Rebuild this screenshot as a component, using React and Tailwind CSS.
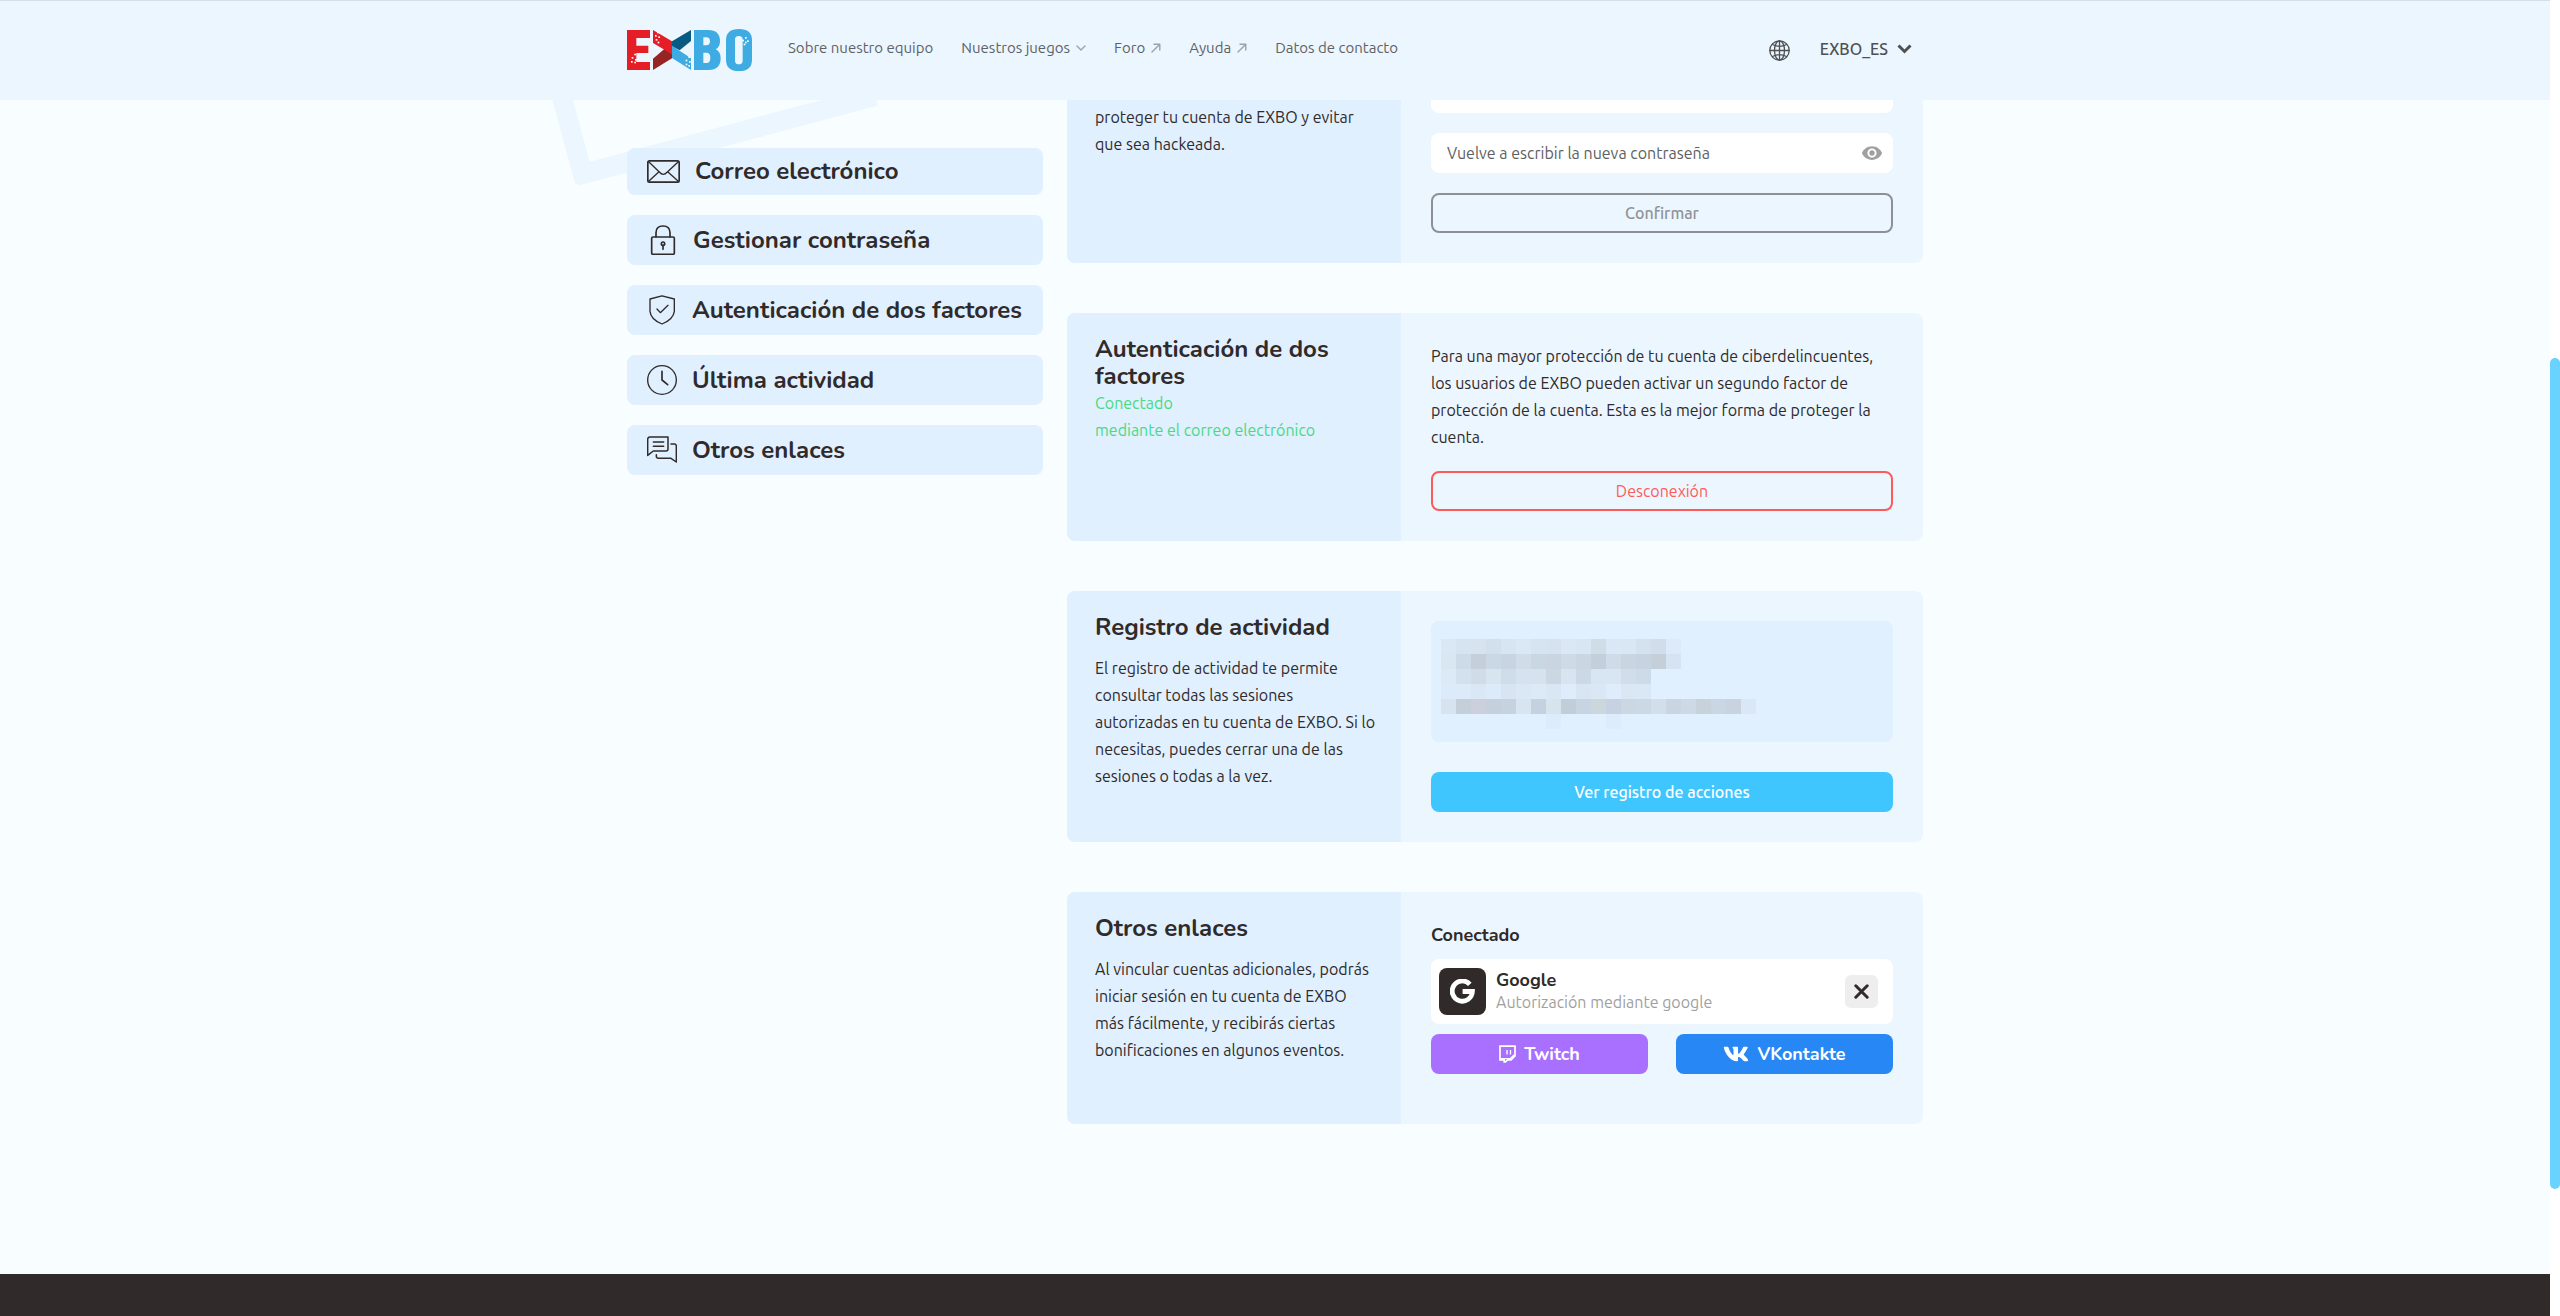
import { FaVk } from 'react-icons/fa';
import { MdVisibility } from 'react-icons/md';

/* ---------- Logo and icons ---------- */

const LOGO_DOTS = [
  [14, 84], [22, 74], [24, 90], [12, 96], [22, 98],
  [90, 8], [84, 18], [94, 22], [86, 30], [92, 38],
  [184, 82], [176, 92], [186, 96], [176, 104], [184, 108],
  [354, 24], [346, 32], [354, 38], [360, 34], [350, 44],
];

function Logo() {
  return (
    <svg viewBox="0 0 375 126" className="w-[125px] h-[42px]" role="img" aria-label="EXBO">
      <path fill="#e51d26" d="M0 3H69V27H28V50H64V72H28V99H69V123H0Z" />
      <path fill="#962423" d="M78 123V89L112 60L135 74V88Z" />
      <path fill="#e51d26" d="M78 3L135 37V76L78 42Z" />
      <path fill="#075a82" d="M192 3V36L158 64L135 52V37Z" />
      <path fill="#3eabe2" d="M135 50L192 88V123L135 87Z" />
      <path
        fill="#3eabe2"
        fillRule="evenodd"
        d="M201 3H243Q279 3 279 37Q279 54 266 61Q281 68 281 88Q281 123 245 123H201ZM229 25V49H238Q249 49 249 37Q249 25 238 25ZM229 71V102H238Q250 102 250 86Q250 71 238 71Z"
      />
      <path
        fill="#3eabe2"
        fillRule="evenodd"
        d="M297 34Q297 0 336 0Q375 0 375 34V92Q375 126 336 126Q297 126 297 92ZM324 32V95Q324 106 335 106Q347 106 347 95V32Q347 21 335 21Q324 21 324 32Z"
      />
      {LOGO_DOTS.map(([x, y]) => (
        <rect key={`${x}-${y}`} x={x} y={y} width="5" height="5" fill="#fff" />
      ))}
    </svg>
  );
}

const line = { fill: 'none', stroke: 'currentColor', strokeLinecap: 'round', strokeLinejoin: 'round' };

const MailIcon = () => (
  <svg viewBox="141 90 99 69" className="h-[23px] w-[33px] shrink-0" aria-hidden="true" {...line} strokeWidth="5">
    <rect x="143.5" y="92.5" width="94" height="64" rx="5" />
    <path strokeWidth="4" d="M146 95L178 126Q190 140 202 126L235 95M146 154L177 125M203 125L235 154" />
  </svg>
);

const LockIcon = () => (
  <svg viewBox="141 285 93 90" className="h-[30px] w-[31px] shrink-0" aria-hidden="true" {...line} strokeWidth="5">
    <rect x="155" y="321" width="68" height="52" rx="4" />
    <path d="M168 320V308Q168 288 189 288Q210 288 210 308V320" />
    <circle cx="189" cy="341" r="5" />
    <path d="M189 346V358" />
  </svg>
);

const ShieldIcon = () => (
  <svg viewBox="141 495 90 90" className="h-[30px] w-[30px] shrink-0" aria-hidden="true" {...line} strokeWidth="4">
    <path d="M186 497.5L150 507V544Q152 568 186 582Q220 568 223 544V507Z" />
    <path d="M171 537L181 548L204 526" />
  </svg>
);

const ClockIcon = () => (
  <svg viewBox="141 705 90 90" className="h-[30px] w-[30px] shrink-0" aria-hidden="true" {...line} strokeWidth="4">
    <circle cx="186" cy="750" r="43" />
    <path strokeWidth="5" d="M186 724V750L203 764" />
  </svg>
);

const ChatIcon = () => (
  <svg viewBox="141 915 90 90" className="h-[30px] w-[30px] shrink-0" aria-hidden="true" {...line} strokeWidth="4.5">
    <path d="M143 976V928Q143 921 150 921H204V957Q204 963 198 963H160Z" />
    <path d="M160 936H191M160 949H191" />
    <path d="M213 942H223Q229 942 229 948V996L213 985H176Q169 985 169 979V974" />
  </svg>
);

const GlobeIcon = () => (
  <svg viewBox="0 0 21 21" className="size-[21px]" aria-hidden="true" {...line} strokeWidth="1.3">
    <circle cx="10.5" cy="10.5" r="9.7" />
    <ellipse cx="10.5" cy="10.5" rx="5" ry="9.7" />
    <path d="M10.5 1V20M1 10.5H20M3.5 4.5Q10.5 8.2 17.5 4.5M3.5 16.5Q10.5 12.8 17.5 16.5" />
  </svg>
);

const ArrowIcon = () => (
  <svg viewBox="0 0 10 10" className="size-[10px] text-[#9da2a6]" aria-hidden="true" {...line} strokeWidth="1.4">
    <path d="M1 9L8.8 1.2M3 1.2H8.8V7" />
  </svg>
);

const ThinChevron = () => (
  <svg viewBox="0 0 10 6" className="h-[6px] w-[10px] text-[#9da2a6]" aria-hidden="true" {...line} strokeWidth="1.4">
    <path d="M1 1L5 5L9 1" />
  </svg>
);

const BoldChevron = () => (
  <svg viewBox="0 0 15 10" className="h-[10px] w-[15px]" aria-hidden="true" fill="none" stroke="currentColor" strokeWidth="3">
    <path d="M1.5 1.5L7.5 7.5L13.5 1.5" />
  </svg>
);

const GoogleIcon = () => (
  <svg viewBox="0 0 25 25" className="size-[25px]" aria-hidden="true" fill="none" stroke="currentColor" strokeWidth="4.8">
    <path d="M19.8 5.3A10.1 10.1 0 1 0 22.4 12.5H12.6" />
  </svg>
);

const TwitchIcon = () => (
  <svg viewBox="0 0 17 18" className="h-[18px] w-[17px]" aria-hidden="true" fill="none" stroke="currentColor">
    <path strokeWidth="1.7" d="M1 1.2H16V10.8L12 14.8H8.6L6.400 16.900H5.200V14.800H1Z" />
    <path strokeWidth="1.3" d="M8 5V9.500M11.500 5V9.500" />
    <path strokeWidth="1.400" d="M1.800 13.600H11.400L15 10" />
  </svg>
);

const CloseIcon = () => (
  <svg viewBox="0 0 15 15" className="size-[15px]" aria-hidden="true" {...line} strokeWidth="3">
    <path d="M1.8 1.8L13.2 13.2M13.2 1.8L1.8 13.2" />
  </svg>
);

/* ---------- Header ---------- */

function Header() {
  return (
    <header className="relative z-10 h-[100px] border-t border-[#d3dfe9] bg-[#ebf6ff]">
      <div className="mx-auto flex h-full max-w-[1296px] items-center pb-0.5">
        <a href="#inicio" className="mr-9 shrink-0">
          <Logo />
        </a>
        <nav className="flex items-center gap-7 pb-1 text-[15px] leading-5 text-[#5f6265]">
          <a href="#equipo">Sobre nuestro equipo</a>
          <button type="button" className="flex items-center gap-1.5">
            Nuestros juegos <ThinChevron />
          </button>
          <a href="#foro" className="flex items-center gap-1.5">
            Foro <ArrowIcon />
          </a>
          <a href="#ayuda" className="flex items-center gap-1.5">
            Ayuda <ArrowIcon />
          </a>
          <a href="#contacto">Datos de contacto</a>
        </nav>
        <div className="ml-auto flex items-center gap-[30px] pr-[11px] text-[#4f5052]">
          <button type="button" aria-label="Idioma" className="pt-0.5">
            <GlobeIcon />
          </button>
          <button type="button" className="flex items-center gap-[9px] pb-0.5 text-base font-medium">
            EXBO_ES <BoldChevron />
          </button>
        </div>
      </div>
    </header>
  );
}

/* ---------- Sidebar ---------- */

const SECTIONS = [
  { label: 'Correo electrónico', href: '#correo', Icon: MailIcon },
  { label: 'Gestionar contraseña', href: '#contrasena', Icon: LockIcon },
  { label: 'Autenticación de dos factores', href: '#dos-factores', Icon: ShieldIcon },
  { label: 'Última actividad', href: '#actividad', Icon: ClockIcon },
  { label: 'Otros enlaces', href: '#enlaces', Icon: ChatIcon },
];

function Sidebar() {
  return (
    <nav className="relative mt-[105px] flex w-[416px] shrink-0 flex-col gap-5 self-start">
      {SECTIONS.map(({ label, href, Icon }) => (
        <a
          key={label}
          href={href}
          className="flex items-center gap-[15px] rounded-lg bg-[#e0f0ff] py-2.5 pl-5 font-['Nunito',sans-serif] text-2xl leading-[27px] font-bold whitespace-nowrap"
        >
          <Icon />
          {label}
        </a>
      ))}
    </nav>
  );
}

/* ---------- Cards ---------- */

function Card({ id, title, info, infoClass = 'pt-[23px]', className = 'p-[30px]', children }) {
  return (
    <section id={id} className="flex overflow-hidden rounded-lg bg-[#ebf6ff]">
      <div className={`w-[334px] shrink-0 bg-[#e0f0ff] pr-6 pl-7 ${infoClass}`}>
        {title && <h2 className="font-['Nunito',sans-serif] text-2xl leading-[27px] font-bold">{title}</h2>}
        {info}
      </div>
      <div className={`min-w-0 flex-1 ${className}`}>{children}</div>
    </section>
  );
}

function PasswordCard() {
  return (
    <Card id="contrasena" infoClass="pt-[61px]" info={<p>proteger tu cuenta de EXBO y evitar que sea hackeada.</p>}>
      <form className="flex flex-col gap-5">
        <input type="password" aria-label="Nueva contraseña" className="h-10 w-full rounded-lg bg-white px-4" />
        <div className="flex h-10 items-center rounded-lg bg-white pr-2.5 pl-4">
          <input
            type="password"
            aria-label="Vuelve a escribir la nueva contraseña"
            placeholder="Vuelve a escribir la nueva contraseña"
            className="min-w-0 flex-1 bg-transparent outline-none placeholder:text-[#5e5f61]"
          />
          <button type="button" aria-label="Mostrar contraseña" className="text-[#a0a0a0]">
            <MdVisibility size={22} />
          </button>
        </div>
        <button type="submit" disabled className="h-10 rounded-lg border-2 border-[#8d9195] font-medium text-[#909397]">
          Confirmar
        </button>
      </form>
    </Card>
  );
}

function TwoFactorCard() {
  return (
    <Card
      id="dos-factores"
      title="Autenticación de dos factores"
      info={
        <p className="text-[#49d983]">
          Conectado
          <br />
          mediante el correo electrónico
        </p>
      }
    >
      <p>
        Para una mayor protección de tu cuenta de ciberdelincuentes, los usuarios de EXBO pueden activar un segundo
        factor de protección de la cuenta. Esta es la mejor forma de proteger la cuenta.
      </p>
      <button type="button" className="mt-5 h-10 w-full rounded-lg border-2 border-[#ff5a5a] text-[#ff5a5a]">
        Desconexión
      </button>
    </Card>
  );
}

/* Censored session details: one colour per 15px cell, null for an empty cell. */
const MOSAIC = [
  ['#dae8f5', '#d6e4f1', '#d6e4f0', '#d2e0ed', '#d7e5f3', '#dae8f6', '#d6e4f1', '#d4e3ef', '#dae8f6', '#d8e6f3', '#cfdde9', '#dae8f6', '#d9e7f4', '#d4e2ef', '#d0deeb', '#dceaf9'],
  ['#d9e7f3', '#cddbe8', '#c5cfd9', '#cad8e5', '#c9d4e3', '#d0dce8', '#c9d7e5', '#cbd4e1', '#cedae6', '#cad6e2', '#c3cfdb', '#cfdbe8', '#c9d5e1', '#c6d4e1', '#c5cfd9', '#d5e3f2'],
  ['#dceaf8', '#d3e1ee', '#d0dce8', '#d7e5f0', '#cfddea', '#d5e3f0', '#d6e2ee', '#cbd7e3', '#d8e4f0', '#cbd9e6', '#d8e6f4', '#d8e6f3', '#d1ddea', '#cddbe8'],
  ['#dcebfa', '#dceaf9', '#dae8f6', '#dbebf9', '#d7e5f2', '#dae8f5', '#dceaf8', '#d9e7f4', '#deecfb', '#d8e6f3', '#dae8f5', '#deecfb', '#dae8f5', '#d9e8f5'],
  ['#d7e3ef', '#c4cfd9', '#cbd0dc', '#c4d0dc', '#c6d3df', '#d7e5f1', '#c4d2df', '#d6e4ee', '#c1cdd9', '#c7d4e1', '#cbd6dd', '#c6d2e2', '#cbd7e3', '#cbd9e7', '#d2deea', '#c9d5e1', '#ced9e6', '#c8d2db', '#c9d7e5', '#c9d3df', '#d9e7f6'],
  [null, null, null, null, null, null, null, '#dcecfc', null, null, null, '#dcecfc'],
];

function ActivityCard() {
  return (
    <Card
      id="actividad"
      title="Registro de actividad"
      info={
        <p className="mt-3.5">
          El registro de actividad te permite consultar todas las sesiones autorizadas en tu cuenta de EXBO. Si lo
          necesitas, puedes cerrar una de las sesiones o todas a la vez.
        </p>
      }
    >
      <div className="h-[121px] rounded-lg bg-[#e0f0ff] px-2.5 pt-[18px]">
        <svg viewBox="0 0 315 90" className="h-[90px] w-[315px]" shapeRendering="crispEdges" aria-hidden="true">
          {MOSAIC.map((row, y) =>
            row.map((fill, x) => fill && <rect key={`${x}-${y}`} x={x * 15} y={y * 15} width="15" height="15" fill={fill} />)
          )}
        </svg>
      </div>
      <button type="button" className="mt-[30px] h-10 w-full rounded-lg bg-[#40c6ff] font-medium text-white">
        Ver registro de acciones
      </button>
    </Card>
  );
}

function LinksCard() {
  return (
    <Card
      id="enlaces"
      title="Otros enlaces"
      className="px-[30px] pt-[30px] pb-[50px]"
      info={
        <p className="mt-3.5">
          Al vincular cuentas adicionales, podrás iniciar sesión en tu cuenta de EXBO más fácilmente, y recibirás
          ciertas bonificaciones en algunos eventos.
        </p>
      }
    >
      <h3 className="mb-2.5 font-['Nunito',sans-serif] text-lg leading-[27px] font-bold">Conectado</h3>
      <div className="flex h-[65px] items-center rounded-lg bg-white pr-[15px] pl-2">
        <span className="flex size-[47px] items-center justify-center rounded-lg bg-[#302a2a] text-white">
          <GoogleIcon />
        </span>
        <div className="ml-2.5 flex-1 pb-0.5">
          <h4 className="font-['Nunito',sans-serif] text-lg leading-[22px] font-bold">Google</h4>
          <p className="leading-[22px] text-[#9f9fa0]">Autorización mediante google</p>
        </div>
        <button
          type="button"
          aria-label="Desvincular Google"
          className="flex size-[33px] items-center justify-center rounded-md bg-[#eeeeee]"
        >
          <CloseIcon />
        </button>
      </div>
      <div className="mt-2.5 flex gap-7 font-['Nunito',sans-serif] text-lg leading-[27px] font-bold text-white">
        <button type="button" className="flex h-10 flex-1 items-center justify-center gap-2 rounded-lg bg-[#a970ff]">
          <TwitchIcon />
          Twitch
        </button>
        <button type="button" className="flex h-10 flex-1 items-center justify-center gap-2 rounded-lg bg-[#2787f5]">
          <FaVk size={26} aria-hidden="true" />
          VKontakte
        </button>
      </div>
    </Card>
  );
}

/* ---------- Page ---------- */

export default function App() {
  return (
    <div className="flex h-screen overflow-hidden font-['Ubuntu',sans-serif] text-base leading-[27px] text-[#302a2a]">
      <div className="flex min-w-0 flex-1 flex-col overflow-hidden bg-[#f8feff]">
        <Header />
        <main className="relative mx-auto -mt-[57px] mb-[150px] flex w-full max-w-[1296px] gap-6">
          <svg
            viewBox="0 0 1011 258"
            className="absolute top-[57px] -left-[87px] h-[86px] w-[337px]"
            fill="#ebf6ff"
            aria-hidden="true"
          >
            <path d="M37 0H99L149 185L845 0H1011V17L122 255Q108 257 103 244Z" />
          </svg>
          <Sidebar />
          <div className="relative flex min-w-0 flex-1 flex-col gap-[50px]">
            <PasswordCard />
            <TwoFactorCard />
            <ActivityCard />
            <LinksCard />
          </div>
        </main>
        <footer className="min-h-[42px] flex-1 bg-[#302a2a]" />
      </div>
      <div className="flex w-2.5 shrink-0 flex-col bg-white" aria-hidden="true">
        <div className="flex-[358]" />
        <div className="flex-[831] rounded-full bg-[#6ad2ff]" />
        <div className="flex-[127]" />
      </div>
    </div>
  );
}
